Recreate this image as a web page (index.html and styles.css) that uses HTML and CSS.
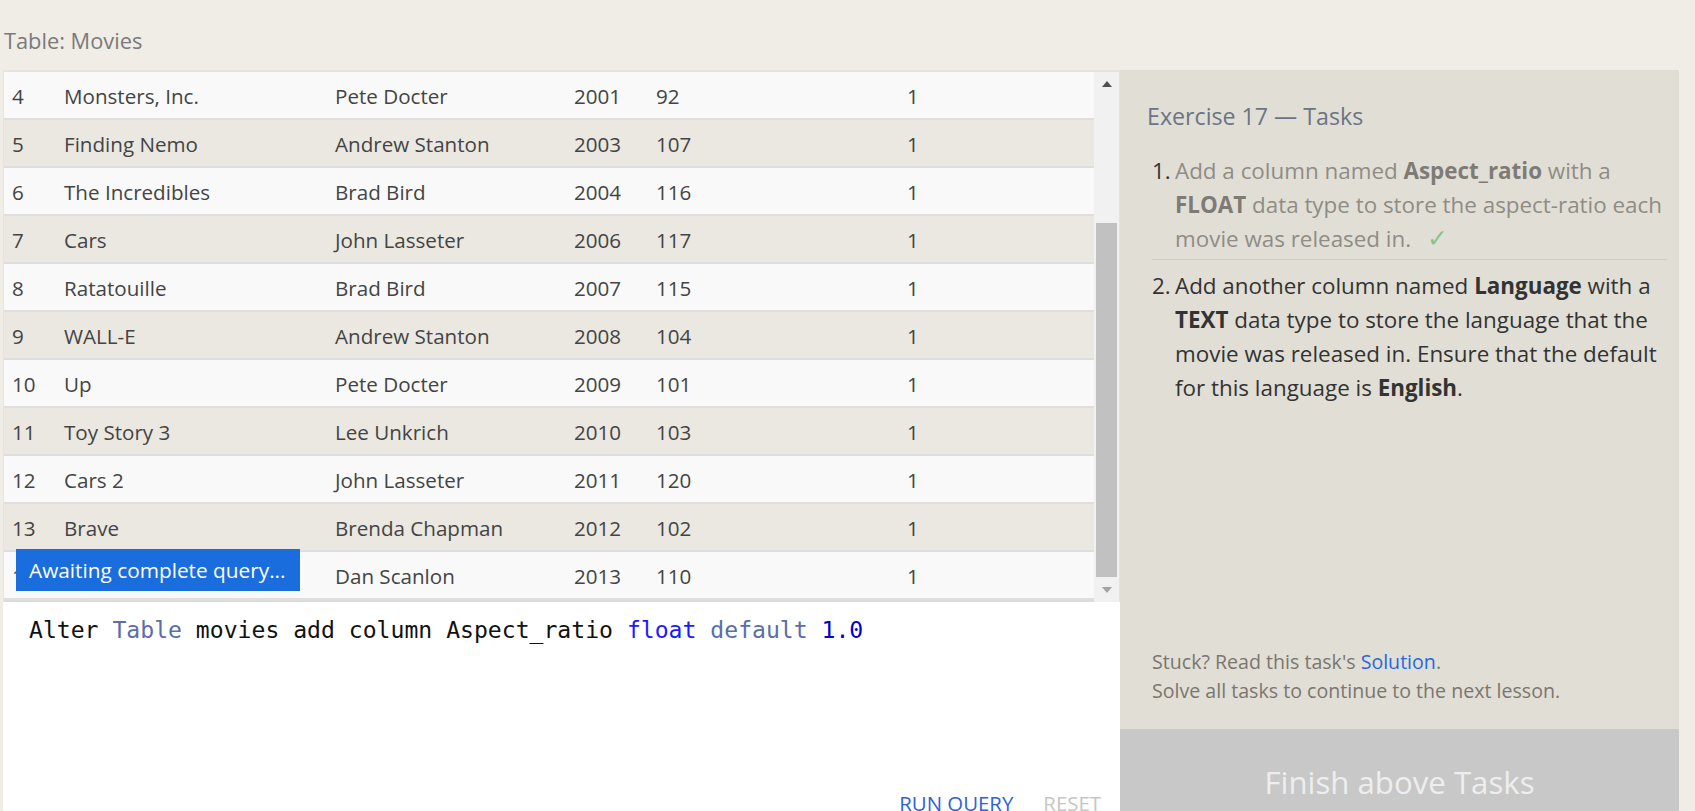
FILE: index.html
```html
<!DOCTYPE html>
<html lang="en">
<head>
<meta charset="utf-8">
<title>Exercise 17</title>
<link rel="stylesheet" href="styles.css">
</head>
<body>
<div class="page">
  <div class="title">Table: Movies</div>
  <div class="main">
    <div class="left">
      <div class="table-box">
        <div class="rows">
          <div class="row"><span>4</span><span>Monsters, Inc.</span><span>Pete Docter</span><span>2001</span><span>92</span><span>1</span></div>
          <div class="row alt"><span>5</span><span>Finding Nemo</span><span>Andrew Stanton</span><span>2003</span><span>107</span><span>1</span></div>
          <div class="row"><span>6</span><span>The Incredibles</span><span>Brad Bird</span><span>2004</span><span>116</span><span>1</span></div>
          <div class="row alt"><span>7</span><span>Cars</span><span>John Lasseter</span><span>2006</span><span>117</span><span>1</span></div>
          <div class="row"><span>8</span><span>Ratatouille</span><span>Brad Bird</span><span>2007</span><span>115</span><span>1</span></div>
          <div class="row alt"><span>9</span><span>WALL-E</span><span>Andrew Stanton</span><span>2008</span><span>104</span><span>1</span></div>
          <div class="row"><span>10</span><span>Up</span><span>Pete Docter</span><span>2009</span><span>101</span><span>1</span></div>
          <div class="row alt"><span>11</span><span>Toy Story 3</span><span>Lee Unkrich</span><span>2010</span><span>103</span><span>1</span></div>
          <div class="row"><span>12</span><span>Cars 2</span><span>John Lasseter</span><span>2011</span><span>120</span><span>1</span></div>
          <div class="row alt"><span>13</span><span>Brave</span><span>Brenda Chapman</span><span>2012</span><span>102</span><span>1</span></div>
          <div class="row"><span>14</span><span>Monsters University</span><span>Dan Scanlon</span><span>2013</span><span>110</span><span>1</span></div>
        </div>
        <div class="scrollbar">
          <div class="sb-btn sb-up"><i class="tri-up"></i></div>
          <div class="sb-track"><div class="sb-thumb"></div></div>
          <div class="sb-btn sb-down"><i class="tri-down"></i></div>
        </div>
        <div class="tooltip">Awaiting complete query...</div>
      </div>
      <div class="editor">
        <div class="code"><span class="kw">Alter</span> <span class="kw2">Table</span> movies add column Aspect_ratio <span class="type">float</span> <span class="kw2">default</span> <span class="num">1.0</span></div>
        <div class="actions">
          <span class="run">RUN QUERY</span>
          <span class="reset">RESET</span>
        </div>
      </div>
    </div>
    <div class="panel">
      <div class="ex-title">Exercise 17 — Tasks</div>
      <ol class="tasks">
        <li class="task done"><span class="num-l">1.</span><span class="task-text">Add a column named <b>Aspect_ratio</b> with a <b>FLOAT</b> data type to store the aspect-ratio each movie was released in. <span class="check">✓</span></span></li>
        <li class="task"><span class="num-l">2.</span><span class="task-text">Add another column named <b>Language</b> with a <b>TEXT</b> data type to store the language that the movie was released in. Ensure that the default for this language is <b>English</b>.</span></li>
      </ol>
      <div class="stuck">
        <div>Stuck? Read this task's <span class="link">Solution</span>.</div>
        <div>Solve all tasks to continue to the next lesson.</div>
      </div>
      <div class="finish">Finish above Tasks</div>
    </div>
  </div>
</div>
</body>
</html>
```

FILE: styles.css
```css
* { box-sizing: border-box; }
html, body { margin: 0; padding: 0; }
body {
  background: #f0ede6;
  font-family: "Open Sans", "Noto Sans", sans-serif;
  height: 811px;
  overflow: hidden;
}
.page { padding: 26px 16px 0 3px; }
.title {
  font-size: 21.8px;
  line-height: 30px;
  color: #7a7a7a;
  padding-left: 1px;
  margin-bottom: 14px;
}
.main { display: flex; align-items: flex-start; }
.left { width: 1117px; display: flex; flex-direction: column; }

.table-box {
  position: relative;
  display: flex;
  height: 532px;
  border-top: 2px solid #e6e3dc;
  border-left: 1px solid #e6e3dc;
  border-right: 1px solid #e6e3dc;
}
.rows { flex: 1; overflow: hidden; background: #dcdcdc; }
.row {
  display: grid;
  grid-template-columns: 52px 271px 239px 82px 251px 1fr;
  align-items: center;
  height: 48px;
  padding: 2px 0 0 8px;
  background: #f9f9f9;
  border-bottom: 2px solid #dedede;
  font-size: 20.6px;
  color: #444444;
  white-space: nowrap;
}
.row.alt { background: #eae8e1; }

.scrollbar {
  width: 25px;
  display: flex;
  flex-direction: column;
  background: #f1f1f1;
}
.sb-btn { display: flex; justify-content: center; align-items: center; }
.sb-up { height: 23px; }
.sb-down { height: 25px; }
.sb-track { flex: 1; padding-top: 128px; }
.sb-thumb { width: 21px; height: 354px; margin-left: 2px; background: #c1c1c1; }
.tri-up {
  width: 0; height: 0;
  border-left: 5.5px solid transparent;
  border-right: 5.5px solid transparent;
  border-bottom: 6px solid #505050;
}
.tri-down {
  width: 0; height: 0;
  border-left: 5.5px solid transparent;
  border-right: 5.5px solid transparent;
  border-top: 6px solid #a3a3a3;
}

.tooltip {
  position: absolute;
  left: 12px;
  bottom: 11px;
  height: 42px;
  padding: 0 14px 0 13px;
  background: #1a6ddc;
  color: #ffffff;
  font-size: 20.8px;
  line-height: 42px;
  white-space: nowrap;
}

.editor {
  height: 233px;
  background: #ffffff;
  display: flex;
  flex-direction: column;
  padding-bottom: 20px;
}
.code {
  padding: 14px 0 0 26px;
  font-family: "DejaVu Sans Mono", "Liberation Mono", monospace;
  font-size: 23.1px;
  line-height: 28px;
  color: #111111;
  white-space: pre;
}
.kw2 { color: #5a6ea8; }
.type { color: #1a1aff; }
.num { color: #0000d0; }
.actions {
  margin-top: auto;
  display: flex;
  justify-content: flex-end;
  gap: 30px;
  padding-right: 19px;
  font-size: 20.4px;
  line-height: 24px;
}
.run { color: #2e62d9; }
.reset { color: #c6c6c6; }

.panel {
  width: 559px;
  height: 765px;
  background: #e1dfd5;
  display: flex;
  flex-direction: column;
}
.ex-title {
  margin-top: 31px;
  padding-left: 27px;
  font-size: 23.2px;
  line-height: 30px;
  color: #6a7486;
}
.tasks {
  list-style: none;
  margin: 21px 12px 0 32px;
  padding: 0;
}
.task {
  display: flex;
  font-size: 22.4px;
  line-height: 34px;
  color: #333333;
}
.task.done {
  padding: 2px 0 3px;
  border-bottom: 1px solid #cfccc3;
  color: #8f8c86;
}
.task.done .num-l { color: #333333; }
.task.done b { color: #7e7b76; }
.task + .task { padding-top: 9px; }
.num-l { width: 23px; flex: none; }
.task-text { flex: 1; }
.check {
  color: #7fc78b;
  margin-left: 10px;
  font-family: "DejaVu Sans", sans-serif;
  font-size: 25px;
  line-height: 20px;
}

.stuck {
  margin-top: auto;
  padding: 0 0 24px 32px;
  font-size: 19.6px;
  line-height: 29px;
  color: #7a7670;
}
.link { color: #2767e0; }
.finish {
  height: 106px;
  line-height: 106px;
  text-align: center;
  background: #c8c8c8;
  color: #eeeeee;
  font-size: 31.2px;
}
```
